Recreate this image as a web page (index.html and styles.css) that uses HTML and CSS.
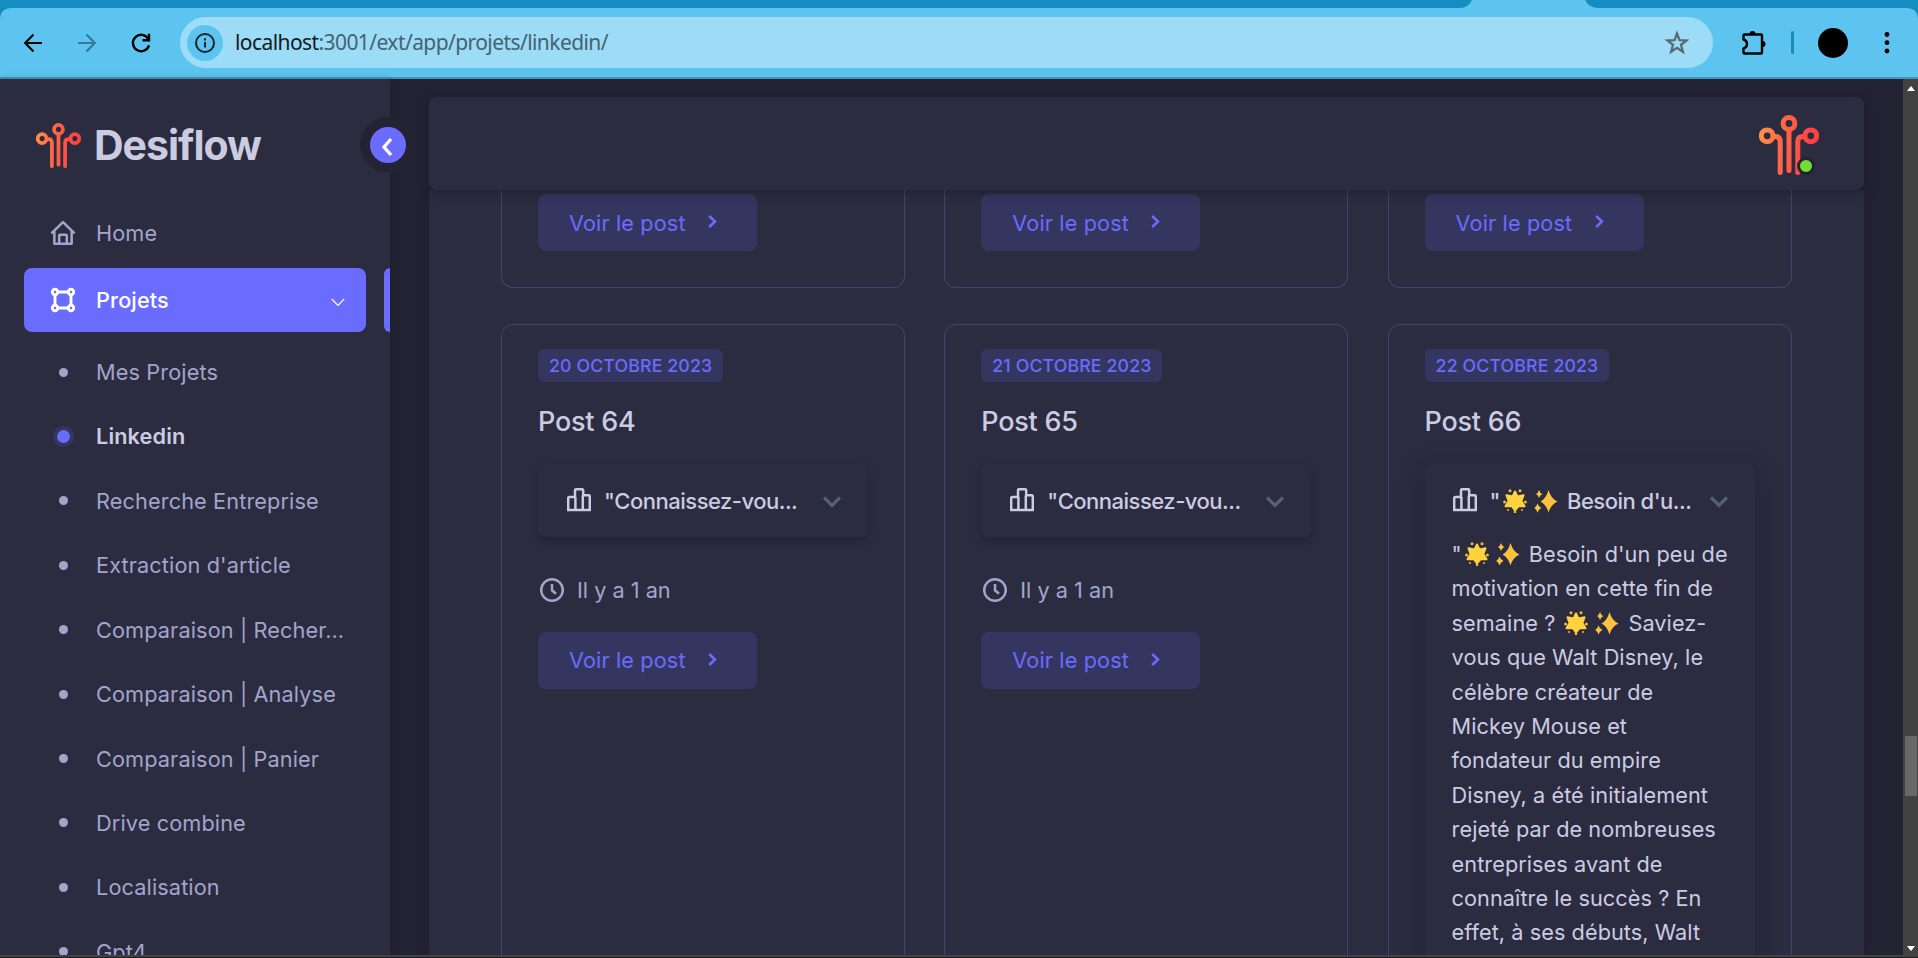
FILE: index.html
```html
<!DOCTYPE html>
<html lang="fr">
<head>
<meta charset="utf-8">
<title>Desiflow</title>
<link rel="stylesheet" href="styles.css">
</head>
<body>
<svg class="defs" width="0" height="0" aria-hidden="true">
  <defs>
    <linearGradient id="flame" gradientUnits="userSpaceOnUse" x1="0" y1="20" x2="60" y2="26">
      <stop offset="0" stop-color="#ff9048"/><stop offset=".35" stop-color="#ff6a48"/><stop offset=".8" stop-color="#ff4646"/><stop offset="1" stop-color="#ff4040"/>
    </linearGradient>
    <symbol id="logo" viewBox="0 0 60 60">
      <g fill="none" stroke="url(#flame)" stroke-width="5" stroke-linecap="round" stroke-linejoin="round">
        <circle cx="8.2" cy="20.8" r="5.900"/><circle cx="30" cy="8.5" r="5.900"/><circle cx="51.8" cy="20.8" r="5.900"/>
        <path d="M15 21.5h1.500q4.700 0 4.700 5V57.500M30 15.500V55.500M45 21.500h-1.500q-4.700 0-4.700 5V57.500"/>
      </g>
    </symbol>
    <symbol id="podium" viewBox="0 0 24 24">
      <path d="M1.200 22V10.200q0-1.200 1.200-1.200H8V2.400Q8 1.200 9.200 1.200H15q1.200 0 1.200 1.200V7.200H21.600q1.200 0 1.200 1.200V22ZM8.400 9V22M15.800 7.500V22" fill="none" stroke="currentColor" stroke-width="2.500"/>
    </symbol>
    <symbol id="clock" viewBox="0 0 24 24">
      <circle cx="12" cy="12" r="10.800" fill="none" stroke="currentColor" stroke-width="2.500"/>
      <path d="M12 6v6.300l4 3.400" fill="none" stroke="currentColor" stroke-width="2.500"/>
    </symbol>
    <symbol id="chev-down" viewBox="0 0 18 12"><path d="M1 1.500 9 9.500 17 1.500" fill="none" stroke="currentColor" stroke-width="3.300"/></symbol>
    <symbol id="chev-right" viewBox="0 0 9 13"><path d="M1.200 1 7 6.500 1.200 12" fill="none" stroke="currentColor" stroke-width="2.500"/></symbol>
    <symbol id="sun" viewBox="0 0 24 24">
      <path d="M12 2.500 14.400 7.500 20.500 6.300 18.400 12 21.500 17.300 15.700 17 12 21.300 8.700 17 2.500 17.300 5.600 12 3.500 6.300 9.600 7.500Z" fill="#ffd23f" stroke="#ffd23f" stroke-width="2" stroke-linejoin="round"/>
      <g fill="#f8b931"><circle cx="7" cy="1.800" r="1.500"/><circle cx="17" cy="1.800" r="1.500"/><circle cx="1.600" cy="13" r="1.500"/><circle cx="22.400" cy="13" r="1.500"/><circle cx="12" cy="23" r="1.300"/><circle cx="5" cy="21" r="1"/><circle cx="19" cy="21" r="1"/></g>
    </symbol>
    <symbol id="sparkles" viewBox="0 0 24 24">
      <path d="M14.500 1Q16.800 9.500 23.500 12.500 16.800 15.500 14.500 23.500 12.200 15.500 6.500 12.500 12.200 9.500 14.500 1ZM5 1Q5.900 4 8.500 5 5.900 6 5 9 4.100 6 2 5 4.100 4 5 1ZM3.500 14.500Q4.500 17.800 7.500 19 4.500 20.200 3.500 23.500 2.500 20.200 .2 19 2.500 17.800 3.500 14.500Z" fill="#fcc13e"/>
    </symbol>
  </defs>
</svg>

<div class="browser">
  <header class="chrome">
    <svg class="tabs" width="1918" height="20" viewBox="0 0 1918 20">
      <path d="M0 0H1472Q1468 8 1460 8H12Q0 8 0 20ZM1585 0H1918V20Q1918 8 1906 8H1599Q1589 8 1585 0Z" fill="#148dc1"/>
    </svg>
    <div class="toolbar">
      <svg class="nav-back" width="20" height="20" viewBox="0 0 20 20" fill="none" stroke="#000" stroke-width="2.200"><path d="M19 10H2.500M10.500 1.600 2.200 10l8.300 8.400"/></svg>
      <svg class="nav-forward" width="20" height="20" viewBox="0 0 20 20" fill="none" stroke="#37799b" stroke-width="2.200"><path d="M1 10h16.500M9.500 1.600 17.800 10l-8.300 8.400"/></svg>
      <svg class="nav-reload" width="20" height="20" viewBox="0 0 20 20" fill="none" stroke="#000" stroke-width="2.400"><path d="M18 12.300A8.200 8.200 0 1 1 17.300 6"/><path d="M18 .8V7.200H11.500"/></svg>
      <div class="omnibox">
        <span class="site-info"><svg width="22" height="22" viewBox="0 0 22 22"><circle cx="11" cy="11" r="9" fill="none" stroke="#16242c" stroke-width="2"/><path d="M11 10v5.500M11 6.200v2.200" stroke="#16242c" stroke-width="2"/></svg></span>
        <span class="url"><b>localhost</b>:3001/ext/app/projets/linkedin/</span>
        <svg class="star" width="24" height="24" viewBox="0 0 24 24"><path d="M12 2.500 14.500 9.100 21.500 9.400 16 13.800 17.900 20.800 12 16.900 6.100 20.800 8 13.800 2.500 9.400 9.500 9.100Z" fill="none" stroke="#5b6a72" stroke-width="2.300"/></svg>
      </div>
      <svg class="puzzle" width="26" height="26" viewBox="0 0 26 26"><path d="M3.500 4.500H20Q21 4.500 21 5.500V22.500Q21 23.500 20 23.500H3.500Q2.500 23.500 2.500 22.500V18.500Q6 17.500 6 14T2.500 9.500V5.500Q2.500 4.500 3.500 4.500Z" fill="none" stroke="#000" stroke-width="2.400" stroke-linejoin="round"/><path d="M8.500 4a3 3 0 0 1 6 0ZM21.500 11a3 3 0 0 1 0 6Z"/></svg>
      <span class="divider"></span>
      <span class="profile"></span>
      <svg class="dots" width="6" height="22" viewBox="0 0 6 22"><circle cx="3" cy="2.500" r="2.400"/><circle cx="3" cy="10.700" r="2.400"/><circle cx="3" cy="19" r="2.400"/></svg>
    </div>
  </header>

  <div class="app">
    <aside class="sidebar">
      <div class="brand">
        <svg width="45" height="45"><use href="#logo"/></svg>
        <span class="brand-name">Desiflow</span>
        <span class="toggle"><span class="toggle-dot"><svg width="12" height="20" viewBox="0 0 12 20"><path d="M10 2 3 10l7 8" fill="none" stroke="#fff" stroke-width="3.400"/></svg></span></span>
      </div>
      <nav class="menu">
        <a class="item"><svg class="item-icon" width="28" height="28" viewBox="0 0 28 28" fill="none" stroke="currentColor" stroke-width="2.700" stroke-linejoin="round"><path d="M1.500 14.500 14 2.200 26.500 14.500M4.700 12V25.500H23.300V12M9.900 25.500V16.700Q9.900 15.800 10.800 15.800H17.200Q18.100 15.800 18.100 16.700V25.500"/></svg><span>Home</span></a>
        <div class="item-row">
          <a class="item active"><svg class="item-icon" width="26" height="26" viewBox="0 0 26 26" fill="none" stroke="currentColor" stroke-width="2.900"><circle cx="5" cy="5" r="2.700"/><circle cx="21" cy="5" r="2.700"/><circle cx="5" cy="21" r="2.700"/><circle cx="21" cy="21" r="2.700"/><path d="M8 5H18M8 21H18M5 8V18M21 8V18"/></svg><span>Projets</span><svg class="caret" width="14" height="9" viewBox="0 0 14 9"><path d="M.8 1 7 7.400 13.200 1" fill="none" stroke="#fff" stroke-width="1.200"/></svg></a>
          <span class="marker"></span>
        </div>
        <div class="submenu">
          <a class="sub"><i></i><span>Mes Projets</span></a>
          <a class="sub current"><i></i><span>Linkedin</span></a>
          <a class="sub"><i></i><span>Recherche Entreprise</span></a>
          <a class="sub"><i></i><span>Extraction d'article</span></a>
          <a class="sub"><i></i><span>Comparaison | Recher...</span></a>
          <a class="sub"><i></i><span>Comparaison | Analyse</span></a>
          <a class="sub"><i></i><span>Comparaison | Panier</span></a>
          <a class="sub"><i></i><span>Drive combine</span></a>
          <a class="sub"><i></i><span>Localisation</span></a>
          <a class="sub"><i></i><span>Gpt4</span></a>
        </div>
      </nav>
    </aside>

    <main class="main">
      <div class="topbar"><div class="avatar"><svg width="60" height="60"><use href="#logo"/></svg><span class="online"></span></div></div>
      <div class="panel">
        <div class="row-above">
          <article class="card"><a class="btn"><span>Voir le post</span><svg width="9" height="13"><use href="#chev-right"/></svg></a></article>
          <article class="card"><a class="btn"><span>Voir le post</span><svg width="9" height="13"><use href="#chev-right"/></svg></a></article>
          <article class="card"><a class="btn"><span>Voir le post</span><svg width="9" height="13"><use href="#chev-right"/></svg></a></article>
        </div>
        <div class="row-posts">
          <article class="card">
            <span class="badge">20 OCTOBRE 2023</span>
            <h5 class="title">Post 64</h5>
            <div class="accordion"><div class="acc-head"><svg width="24" height="24"><use href="#podium"/></svg><span class="acc-title">"Connaissez-vou...</span><svg class="acc-chev" width="18" height="12"><use href="#chev-down"/></svg></div></div>
            <div class="when"><svg width="24" height="24"><use href="#clock"/></svg><span>Il y a 1 an</span></div>
            <a class="btn"><span>Voir le post</span><svg width="9" height="13"><use href="#chev-right"/></svg></a>
          </article>
          <article class="card">
            <span class="badge">21 OCTOBRE 2023</span>
            <h5 class="title">Post 65</h5>
            <div class="accordion"><div class="acc-head"><svg width="24" height="24"><use href="#podium"/></svg><span class="acc-title">"Connaissez-vou...</span><svg class="acc-chev" width="18" height="12"><use href="#chev-down"/></svg></div></div>
            <div class="when"><svg width="24" height="24"><use href="#clock"/></svg><span>Il y a 1 an</span></div>
            <a class="btn"><span>Voir le post</span><svg width="9" height="13"><use href="#chev-right"/></svg></a>
          </article>
          <article class="card">
            <span class="badge">22 OCTOBRE 2023</span>
            <h5 class="title">Post 66</h5>
            <div class="accordion open">
              <div class="acc-head"><svg width="24" height="24"><use href="#podium"/></svg><span class="acc-title">"<svg class="emoji first" width="24" height="24"><use href="#sun"/></svg><svg class="emoji" width="24" height="24"><use href="#sparkles"/></svg><span class="after-emoji">Besoin d'u...</span></span><svg class="acc-chev" width="18" height="12"><use href="#chev-down"/></svg></div>
              <p class="acc-body">
                <span>"<svg class="emoji first" width="24" height="24"><use href="#sun"/></svg><svg class="emoji" width="24" height="24"><use href="#sparkles"/></svg><span class="after-emoji">Besoin d'un peu de</span></span>
                <span>motivation en cette fin de</span>
                <span>semaine ? <svg class="emoji first" width="24" height="24"><use href="#sun"/></svg><svg class="emoji" width="24" height="24"><use href="#sparkles"/></svg><span class="after-emoji">Saviez-</span></span>
                <span>vous que Walt Disney, le</span>
                <span>célèbre créateur de</span>
                <span>Mickey Mouse et</span>
                <span>fondateur du empire</span>
                <span>Disney, a été initialement</span>
                <span>rejeté par de nombreuses</span>
                <span>entreprises avant de</span>
                <span>connaître le succès ? En</span>
                <span>effet, à ses débuts, Walt</span>
              </p>
            </div>
          </article>
        </div>
      </div>
    </main>

    <div class="scrollbar">
      <svg class="arrow-up" width="8" height="5" viewBox="0 0 8 5"><path d="M0 5 4 0 8 5Z" fill="#fff"/></svg>
      <span class="thumb"></span>
      <svg class="arrow-down" width="8" height="5" viewBox="0 0 8 5"><path d="M0 0 4 5 8 0Z" fill="#fff"/></svg>
    </div>
  </div>
</div>
</body>
</html>
```

FILE: styles.css
```css
* { box-sizing: border-box; }
body { margin: 0; font-family: Inter, "Liberation Sans", sans-serif; background: #1c1c1f; }
svg { display: block; flex: none; overflow: visible; }
.defs { position: absolute; }

.browser { width: 1918px; height: 957px; overflow: hidden; display: flex; flex-direction: column; border-bottom: 2px solid #424242; background: #232333; }

/* Browser chrome */
.chrome { position: relative; flex: none; height: 79px; background: #5dc4f0; border-bottom: 2px solid #4196bc; }
.tabs { position: absolute; left: 0; top: 0; }
.toolbar { height: 77px; padding: 8px 0 0 23px; display: flex; align-items: center; }
.nav-back, .nav-forward { margin-right: 34px; }
.nav-reload { margin-right: 29px; }
.omnibox { width: 1533px; height: 51px; border-radius: 26px; background: #9cdcf7; display: flex; align-items: center; padding: 0 24px 0 7px; }
.site-info { width: 36px; height: 36px; border-radius: 50%; background: #5dc4f0; display: flex; align-items: center; justify-content: center; }
.url { flex: 1; margin-left: 12px; padding-bottom: 1px; font: 21px/30px "Noto Sans", sans-serif; letter-spacing: -.58px; color: #46626f; }
.url b { font-weight: 400; color: #121b20; }
.puzzle { margin-left: 28px; }
.divider { width: 3px; height: 23px; border-radius: 2px; background: #148dc1; margin-left: 24px; }
.profile { width: 30px; height: 30px; border-radius: 50%; background: #000; margin-left: 24px; }
.dots { margin-left: 36px; }

/* Application */
.app { flex: 1; min-height: 0; display: flex; }
.sidebar { position: relative; z-index: 3; width: 390px; background: #2b2c40; color: #a3a4cc; font-size: 21.7px; letter-spacing: .12px; box-shadow: 0 2px 9px rgba(20, 20, 29, .35); }
.brand { position: relative; height: 118px; padding: 44px 0 0 36px; display: flex; align-items: flex-start; }
.brand-name { margin-left: 13px; margin-top: -7px; font-size: 41px; line-height: 58px; font-weight: 700; letter-spacing: -1px; color: #cbcbe2; }
.toggle { position: absolute; left: 360px; top: 38px; width: 56px; height: 56px; border-radius: 50%; background: #232333; display: flex; align-items: center; justify-content: center; }
.toggle-dot { width: 36px; height: 36px; border-radius: 50%; background: #696cff; display: flex; align-items: center; justify-content: center; padding: 3px 2px 0 0; }
.menu { padding-left: 24px; }
.item { display: flex; align-items: center; width: 342px; height: 64px; margin-top: 4px; padding: 0 21px 0 26px; border-radius: 8px; }
.item-icon { width: 26px; height: 26px; }
.item > span { flex: 1; margin-left: 20px; }
.item-row { display: flex; justify-content: space-between; margin-top: 3px; }
.item-row .item { margin-top: 0; }
.active { background: #696cff; color: #fff; font-weight: 500; }
.caret { margin-top: 4px; }
.marker { width: 6px; height: 64px; border-radius: 8px 0 0 8px; background: #696cff; }
.submenu { padding-top: 8px; }
.sub { display: flex; align-items: center; height: 64.4px; white-space: nowrap; }
.sub i { width: 9px; height: 9px; margin: 0 28px 0 35px; border-radius: 50%; background: #a3a4cc; }
.current { color: #cbcbe2; font-weight: 600; }
.current span { padding-bottom: 2px; }
.current i { width: 13px; height: 13px; margin: 0 26px 0 33px; background: #696cff; box-shadow: 0 0 0 4px #35365f; }

.main { flex: 1; min-width: 0; padding: 18px 39px 0; display: flex; flex-direction: column; }
.topbar { position: relative; z-index: 2; flex: none; height: 93px; background: #2b2c40; border-radius: 8px; box-shadow: 0 2px 12px rgba(20, 20, 29, .55); display: flex; justify-content: flex-end; padding: 18px 45px 0; }
.avatar { position: relative; width: 60px; height: 60px; }
.online { position: absolute; left: 38px; top: 42px; width: 18px; height: 18px; border-radius: 50%; border: 3px solid #232333; background: #71dd37; }
.panel { flex: 1; min-height: 0; background: #2b2c40; padding: 0 72px; box-shadow: 0 3px 12px rgba(20, 20, 29, .3); }
.row-above, .row-posts { display: grid; grid-template-columns: repeat(3, 404px); column-gap: 39.3px; }
.card { border: 1px solid #444564; border-radius: 12px; padding: 24px 36px; }
.row-above .card { height: 98px; border-top: 0; border-radius: 0 0 12px 12px; padding-top: 4px; }
.row-posts { height: 631px; margin-top: 36px; overflow: hidden; }
.row-posts .card { height: 700px; }
.btn { display: flex; align-items: center; width: 219px; height: 57px; padding: 0 0 0 31px; border-radius: 8px; background: #35365f; color: #696cff; font-size: 21.7px; letter-spacing: .12px; }
.row-posts .btn { padding-bottom: 1px; }
.btn span { width: 139px; }
.btn svg { margin-top: -2px; }
.badge { display: inline-flex; align-items: center; height: 33px; padding: 0 11px; border-radius: 6px; background: #35365f; color: #696cff; font-size: 17.8px; font-weight: 500; vertical-align: top; letter-spacing: .1px; }
.title { margin: 19px 0 0; font-size: 27px; line-height: 41px; font-weight: 500; letter-spacing: -.25px; color: #cbcbe2; }
.accordion { width: 330px; height: 73px; margin-top: 22px; padding: 0 27px 0 28px; border-radius: 6px; background: #2b2c40; box-shadow: 0 4px 8px -1px rgba(20, 20, 29, .42); color: #cbcbe2; }
.acc-head { display: flex; align-items: center; height: 72px; font-size: 22px; font-weight: 500; padding-left: 1px; }
.acc-title { flex: 1; margin-left: 13px; padding-top: 2px; white-space: nowrap; letter-spacing: -.5px; }
.acc-chev { color: #516377; margin-top: 3px; }
.open { height: 640px; padding-left: 27px; box-shadow: 0 6px 24px rgba(20, 20, 29, .4); }
.emoji { display: inline-block; vertical-align: -4px; margin-left: 7px; }
.emoji.first { margin-left: 3px; }
.after-emoji { margin-left: 9px; }
.acc-body { margin: 0; padding-top: 1px; font-size: 21.7px; line-height: 34.4px; letter-spacing: .06px; }
.acc-body > span { display: block; white-space: nowrap; height: 34.4px; }
.when { display: flex; align-items: center; height: 34px; margin: 36px 0 25px 2px; color: #a3a4cc; font-size: 21.7px; }
.when span { margin-left: 13px; }

.scrollbar { position: relative; z-index: 4; width: 15px; background: #424242; display: flex; flex-direction: column; align-items: center; }
.arrow-up { margin-top: 7px; }
.thumb { width: 12px; height: 60px; background: #686868; margin-top: 645px; }
.arrow-down { margin-top: auto; margin-bottom: 4px; }
```
